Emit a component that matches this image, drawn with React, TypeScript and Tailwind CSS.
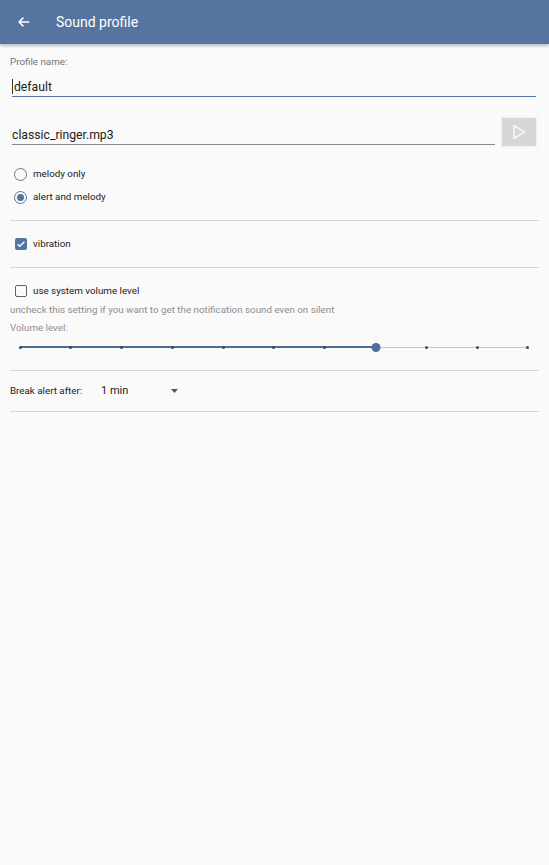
import React, { useState } from 'react';

const Radio: React.FC<{ checked: boolean }> = ({ checked }) => (
  <span
    className={`flex h-[13px] w-[13px] items-center justify-center rounded-full border-[1.5px] ${
      checked ? 'border-[#5274a0]' : 'border-[#737373]'
    }`}
  >
    {checked && <span className="h-[7px] w-[7px] rounded-full bg-[#5274a0]" />}
  </span>
);

const Checkbox: React.FC<{ checked: boolean }> = ({ checked }) =>
  checked ? (
    <span className="flex h-[12px] w-[12px] items-center justify-center rounded-[2px] bg-[#5274a0]">
      <svg width="10" height="10" viewBox="0 0 24 24" fill="none" stroke="white" strokeWidth="3.2">
        <path d="M4 12.5l5 5L20 6.5" />
      </svg>
    </span>
  ) : (
    <span className="block h-[12px] w-[12px] rounded-[2px] border-[1.5px] border-[#616161]" />
  );

const Divider = () => <div className="h-px bg-[#d4d4d4]" />;

const App: React.FC = () => {
  const [mode, setMode] = useState<'melody' | 'alert'>('alert');
  const [vibration, setVibration] = useState(true);
  const [systemVolume, setSystemVolume] = useState(false);
  const volume = 7;
  const steps = Array.from({ length: 11 }, (_, i) => i);

  return (
    <div className="min-h-[865px] bg-[#fafafa] font-['Roboto','Liberation_Sans',sans-serif] text-[#212121]">
      {/* Toolbar */}
      <div className="flex h-[44px] items-center bg-[#5575a0] shadow-[0_2px_3px_rgba(0,0,0,0.25)]">
        <svg className="ml-[17px]" width="14" height="14" viewBox="0 0 24 24" fill="none" stroke="white" strokeWidth="2.6">
          <path d="M21 12H4M11 4.5L3.5 12l7.5 7.5" />
        </svg>
        <span className="ml-[25px] text-[14px] text-white">Sound profile</span>
      </div>

      <div className="px-[10px]">
        {/* Profile name */}
        <div className="pt-[12px] text-[9.8px] leading-[12px] text-[#757575]">Profile name:</div>
        <div className="ml-[2px] mr-[3px] flex h-[29px] items-end border-b border-[#5274a0] pb-[1px] text-[12.2px] leading-[16px]">
          <span className="mr-px mb-px h-[15px] w-px bg-[#333]" />
          <span>default</span>
        </div>

        {/* Melody file */}
        <div className="mt-[21px] mr-[3px] ml-[2px] flex">
          <div className="flex h-[27px] flex-1 items-end border-b border-[#8a8a8a] pb-[1px] text-[12.2px] leading-[16px]">
            classic_ringer.mp3
          </div>
          <button className="ml-[7px] flex h-[28px] w-[34px] items-center justify-center bg-[#d6d6d6] shadow-[0_0_0_1px_#f0f0f0,0_0_3px_rgba(0,0,0,0.08)]">
            <svg width="14" height="16" viewBox="0 0 14 16" fill="none" stroke="#f4f4f4" strokeWidth="1.6" strokeLinejoin="round">
              <path d="M2 1.5L12.5 8L2 14.5Z" />
            </svg>
          </button>
        </div>

        {/* Sound mode */}
        <div className="mt-[17px]">
          <label className="flex h-[23px] items-center" onClick={() => setMode('melody')}>
            <span className="ml-[4px]">
              <Radio checked={mode === 'melody'} />
            </span>
            <span className="ml-[6px] text-[9.8px]">melody only</span>
          </label>
          <label className="flex h-[23px] items-center" onClick={() => setMode('alert')}>
            <span className="ml-[4px]">
              <Radio checked={mode === 'alert'} />
            </span>
            <span className="ml-[6px] text-[9.8px]">alert and melody</span>
          </label>
        </div>

        <div className="mt-[11px]">
          <Divider />
        </div>

        {/* Vibration */}
        <label className="mt-[11px] flex h-[24px] items-center" onClick={() => setVibration(!vibration)}>
          <span className="ml-[5px]">
            <Checkbox checked={vibration} />
          </span>
          <span className="ml-[6px] text-[9.8px]">vibration</span>
        </label>

        <div className="mt-[11px]">
          <Divider />
        </div>

        {/* System volume */}
        <label className="mt-[11px] flex h-[24px] items-center" onClick={() => setSystemVolume(!systemVolume)}>
          <span className="ml-[5px]">
            <Checkbox checked={systemVolume} />
          </span>
          <span className="ml-[6px] text-[9.8px]">use system volume level</span>
        </label>
        <div className="mt-px text-[9.8px] leading-[12px] text-[#8e8e8e]">
          uncheck this setting if you want to get the notification sound even on silent
        </div>
        <div className="mt-[6px] text-[9.8px] leading-[12px] text-[#8e8e8e]">Volume level:</div>

        {/* Volume slider */}
        <div className="mt-[5px] ml-[10px] mr-[11px] flex h-[16px] items-center">
          <div className="relative h-[2px] w-full">
            <div className="absolute inset-x-0 top-[0.5px] h-px bg-[#c4c4c4]" />
            <div className="absolute left-0 top-0 h-[2px] bg-[#4d6e99]" style={{ width: `${volume * 10}%` }} />
            <div className="absolute inset-x-[-1.5px] top-[-0.5px] flex justify-between">
              {steps.map((s) => (
                <span key={s} className="h-[3px] w-[3px] rounded-full bg-[#3f4a59]" />
              ))}
            </div>
            <span
              className="absolute top-[-3.5px] h-[9px] w-[9px] -translate-x-1/2 rounded-full bg-[#4d6e99]"
              style={{ left: `${volume * 10}%` }}
            />
          </div>
        </div>

        <div className="mt-[15px]">
          <Divider />
        </div>

        {/* Break alert */}
        <div className="mt-[8px] flex h-[24px] items-center">
          <span className="w-[91px] text-[9.8px]">Break alert after:</span>
          <span className="w-[70px] text-[11px]">1 min</span>
          <svg width="7" height="4" viewBox="0 0 7 4">
            <path d="M0 0h7L3.5 4z" fill="#555" />
          </svg>
        </div>

        <div className="mt-[8px]">
          <Divider />
        </div>
      </div>
    </div>
  );
};

export default App;
